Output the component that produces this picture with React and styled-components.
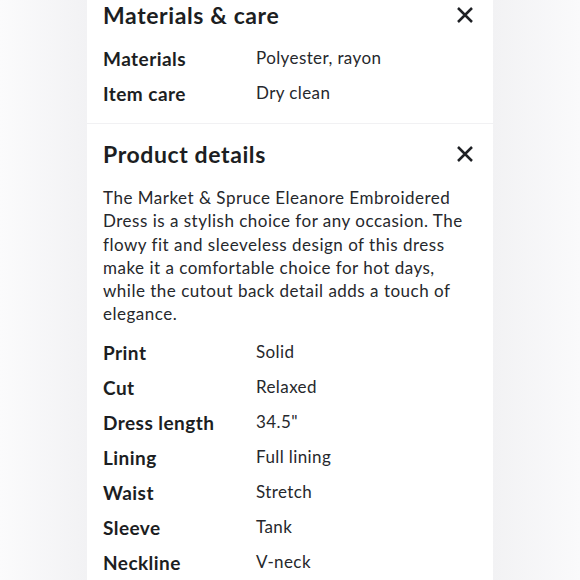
import React from 'react'
import styled, { createGlobalStyle } from "styled-components";

const GlobalStyle = createGlobalStyle`
    html, body {
        margin: 0;
        padding: 0;
    }
    body {
        background: linear-gradient(90deg, #fbfbfc 0%, #f2f2f4 15%, #f2f2f4 85%, #fafafb 100%);
        font-family: Lato, "Noto Sans", sans-serif;
        color: #222428;
    }
`;

const materials = [
    { label: "Materials", value: "Polyester, rayon" },
    { label: "Item care", value: "Dry clean" },
];

const details = [
    { label: "Print", value: "Solid" },
    { label: "Cut", value: "Relaxed" },
    { label: "Dress length", value: '34.5"' },
    { label: "Lining", value: "Full lining" },
    { label: "Waist", value: "Stretch" },
    { label: "Sleeve", value: "Tank" },
    { label: "Neckline", value: "V-neck" },
];

const CloseIcon = () => (
    <svg width="16" height="16" viewBox="0 0 16 16" fill="none">
        <path d="M1 1 L15 15 M15 1 L1 15" stroke="#1f2125" strokeWidth="2.5" strokeLinecap="butt" />
    </svg>
);

const Specs = ({ items }) => (
    <SpecList>
        {items.map((it) => (
            <SpecRow key={it.label}>
                <SpecLabel>{it.label}</SpecLabel>
                <SpecValue>{it.value}</SpecValue>
            </SpecRow>
        ))}
    </SpecList>
);

const App = () => {
    return (
        <Page>
            <GlobalStyle />
            <Section $top="0px" $bottom="12px">
                <Header>
                    <Title>Materials &amp; care</Title>
                    <CloseButton aria-label="close"><CloseIcon /></CloseButton>
                </Header>
                <Specs items={materials} />
            </Section>
            <Section $top="15px" $bottom="20px">
                <Header>
                    <Title>Product details</Title>
                    <CloseButton aria-label="close"><CloseIcon /></CloseButton>
                </Header>
                <Description>
                    The Market &amp; Spruce Eleanore Embroidered Dress is a stylish choice for any occasion. The flowy fit and sleeveless design of this dress make it a comfortable choice for hot days, while the cutout back detail adds a touch of elegance.
                </Description>
                <Specs items={details} />
            </Section>
        </Page>
    )
}

const Page = styled.div`
    width: 406px;
    margin: 0 auto;
    min-height: 580px;
    display: flex;
    flex-direction: column;
    gap: 1px;
    background-color: #f1f1f3;
`;

const Section = styled.section`
    background-color: white;
    padding: ${(p) => p.$top} 20px ${(p) => p.$bottom} 16px;
    &:last-child {
        flex: 1;
    }
`;

const Header = styled.div`
    display: flex;
    justify-content: space-between;
    align-items: center;
    height: 30px;
`;

const Title = styled.h2`
    margin: 0;
    font-size: 23px;
    font-weight: 700;
    letter-spacing: 0.6px;
    color: #1c1e22;
`;

const CloseButton = styled.button`
    border: 0;
    background: none;
    padding: 0;
    width: 16px;
    height: 16px;
    display: flex;
    cursor: pointer;
`;

const Description = styled.p`
    margin: 17px 0 9px;
    font-size: 17px;
    line-height: 23.3px;
    letter-spacing: 0.5px;
    color: #26282c;
`;

const SpecList = styled.div`
    display: flex;
    flex-direction: column;
    margin-top: 11px;
    ${Description} + & {
        margin-top: 0;
    }
`;

const SpecRow = styled.div`
    display: grid;
    grid-template-columns: 153px 1fr;
    align-items: center;
    height: 35px;
`;

const SpecLabel = styled.span`
    font-size: 19px;
    font-weight: 700;
    letter-spacing: 0.45px;
    color: #1c1e22;
`;

const SpecValue = styled.span`
    font-size: 17px;
    letter-spacing: 0.4px;
    color: #26282c;
    position: relative;
    top: -1px;
`;

export default App
